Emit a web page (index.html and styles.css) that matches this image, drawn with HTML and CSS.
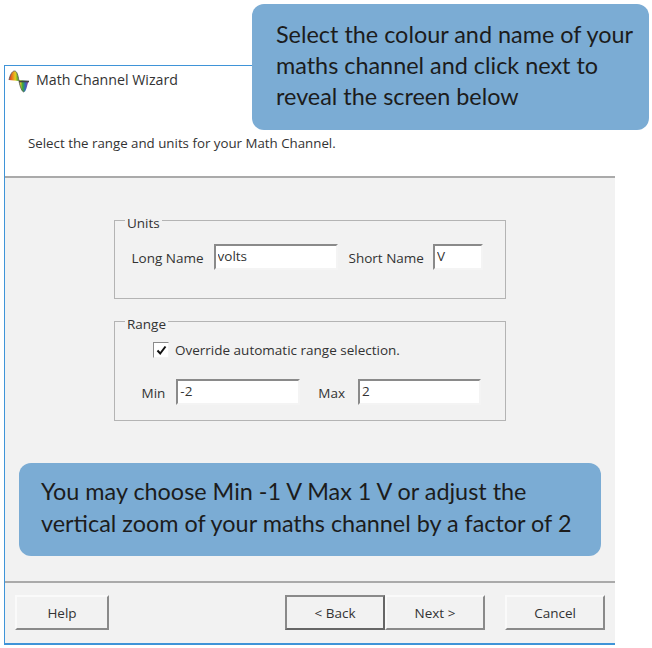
FILE: index.html
```html
<!DOCTYPE html>
<html lang="en">
<head>
<meta charset="utf-8">
<title>Math Channel Wizard</title>
<link rel="stylesheet" href="styles.css">
</head>
<body>
<div class="wizard">
  <header class="head">
    <div class="title-row">
      <svg class="app-icon" width="22" height="24" viewBox="0 0 22 24" aria-hidden="true">
        <defs>
          <linearGradient id="rainbow" x1="0" x2="1" y1="0" y2="0">
            <stop offset="0" stop-color="#d8302a"/>
            <stop offset=".18" stop-color="#e8841c"/>
            <stop offset=".32" stop-color="#e6cc20"/>
            <stop offset=".46" stop-color="#58ac30"/>
            <stop offset=".58" stop-color="#e0c828"/>
            <stop offset=".7" stop-color="#3aa83c"/>
            <stop offset=".84" stop-color="#3566c0"/>
            <stop offset="1" stop-color="#a03a90"/>
          </linearGradient>
        </defs>
        <path d="M1 11C2 6 4 2 6.500 2S10 6 11 12C12 18 14 23 16 23S19 17 20.500 12L11 11L11 12Z" fill="url(#rainbow)"/>
        <path d="M1 11C2 6 4 2 6.500 2S10 6 11 12C12 18 14 23 16 23" fill="none" stroke="#555" stroke-width=".8"/>
        <path d="M11 12.500H21" stroke="#444" stroke-width="1.600"/>
      </svg>
      <span class="title">Math Channel Wizard</span>
    </div>
    <p class="subtitle">Select the range and units for your Math Channel.</p>
  </header>
  <main class="content">
    <fieldset class="group group-units">
      <legend>Units</legend>
      <div class="row row-units">
        <label class="lbl">Long Name</label>
        <input class="field field-long" value="volts">
        <label class="lbl">Short Name</label>
        <input class="field field-short" value="V">
      </div>
    </fieldset>
    <fieldset class="group group-range">
      <legend>Range</legend>
      <div class="check-row">
        <span class="checkbox"><svg width="11" height="11" viewBox="0 0 11 11" aria-hidden="true"><path d="M1.500 5.500L4.200 8.500L9.500 1.500" fill="none" stroke="#111" stroke-width="2"/></svg></span>
        <span class="lbl">Override automatic range selection.</span>
      </div>
      <div class="row row-range">
        <label class="lbl">Min</label>
        <input class="field field-min" value="-2">
        <label class="lbl">Max</label>
        <input class="field field-max" value="2">
      </div>
    </fieldset>
  </main>
  <footer class="foot">
    <button class="btn btn-help">Help</button>
    <div class="nav">
      <button class="btn btn-default">&lt; Back</button>
      <button class="btn">Next &gt;</button>
    </div>
    <button class="btn">Cancel</button>
  </footer>
</div>
<aside class="callout callout-top">Select the colour and name of your<br>maths channel and click next to<br>reveal the screen below</aside>
<aside class="callout callout-bottom">You may choose Min -1 V Max 1 V or adjust the<br>vertical zoom of your maths channel by a factor of 2</aside>
</body>
</html>
```
FILE: styles.css
```css
* { box-sizing: border-box; }
html, body { margin: 0; background: #fff; }
body {
  width: 652px;
  height: 648px;
  padding: 65px 0 0 4px;
  position: relative;
  overflow: hidden;
  font-family: "Open Sans", "Noto Sans", sans-serif;
  font-size: 13.5px;
  color: #333;
}
.wizard {
  width: 611px;
  height: 580px;
  display: flex;
  flex-direction: column;
  border-left: 1px solid #3f94d8;
  border-top: 1px solid #3f94d8;
  border-bottom: 2px solid #3f94d8;
}
.head {
  height: 112px;
  background: #fff;
  border-bottom: 2px solid #aaa;
}
.title-row {
  display: flex;
  align-items: center;
  height: 27px;
  padding-left: 3px;
}
.app-icon { flex: none; margin-top: 2px; }
.title { margin-left: 6px; font-size: 14.2px; }
.subtitle {
  margin: 41px 0 0 23px;
  font-size: 13.3px;
  line-height: 18px;
}
.content {
  flex: 1;
  background: #f2f2f2;
  padding-top: 30px;
  border-bottom: 2px solid #aaa;
}
.group {
  width: 392px;
  margin: 0 0 0 109px;
  padding: 0;
  border: 1.5px solid #b4b4b4;
  min-inline-size: 0;
}
.group legend {
  margin-left: 10px;
  padding: 6px 2px 0;
  font-size: 13.5px;
  line-height: 18px;
}
.group-units { height: 91px; }
.group-range { height: 112px; margin-top: 10px; }
.row { display: flex; align-items: center; }
.row-units { padding: 12px 0 0 16.5px; }
.row-range { padding: 18px 0 0 26.5px; }
.lbl { font-size: 13.5px; line-height: 18px; }
.row .lbl { margin-top: 2px; }
.field {
  height: 26px;
  padding: 0 2px 2px;
  background: #fff;
  border: 2px solid;
  border-color: #8a8a8a #f4f4f4 #f4f4f4 #8a8a8a;
  font: 13.5px "Open Sans", "Noto Sans", sans-serif;
  color: #333;
  outline: none;
}
.field-long { width: 124px; margin: 0 11px 0 10px; }
.field-short { width: 50px; margin-left: 9px; }
.field-min { width: 124px; margin: 0 18px 0 11px; }
.field-max { width: 123px; margin-left: 13px; }
.check-row {
  display: flex;
  align-items: center;
  margin-top: 6px;
  padding-left: 38px;
  height: 22px;
}
.checkbox {
  width: 16px;
  height: 16px;
  margin-right: 6px;
  display: flex;
  align-items: center;
  justify-content: center;
  background: #fff;
  border: 1.5px solid;
  border-color: #8a8a8a #f4f4f4 #f4f4f4 #8a8a8a;
}
.foot {
  height: 60px;
  background: #f2f2f2;
  display: flex;
  align-items: flex-start;
  padding: 12px 0 0 10px;
}
.btn {
  width: 100px;
  height: 35px;
  padding: 0;
  background: #f2f2f2;
  border: 2px solid;
  border-color: #fafafa #8a8a8a #8a8a8a #fafafa;
  font: 13.5px "Open Sans", "Noto Sans", sans-serif;
  color: #333;
}
.btn-help { width: 94px; }
.nav { display: flex; margin: 0 20px 0 176px; }
.btn-default { border-color: #8a8a8a #666 #666 #8a8a8a; }
.callout {
  position: absolute;
  background: #7bacd4;
  color: #1c1c1c;
  font-family: Lato, "Open Sans", sans-serif;
  border-radius: 12px;
  white-space: nowrap;
}
.callout-top {
  left: 252px;
  top: 4px;
  width: 397px;
  height: 126px;
  padding: 15px 0 0 24px;
  font-size: 23.4px;
  line-height: 31px;
}
.callout-bottom {
  left: 19px;
  top: 463px;
  width: 582px;
  height: 93px;
  padding: 12px 0 0 22px;
  font-size: 23.4px;
  line-height: 32px;
}
```
